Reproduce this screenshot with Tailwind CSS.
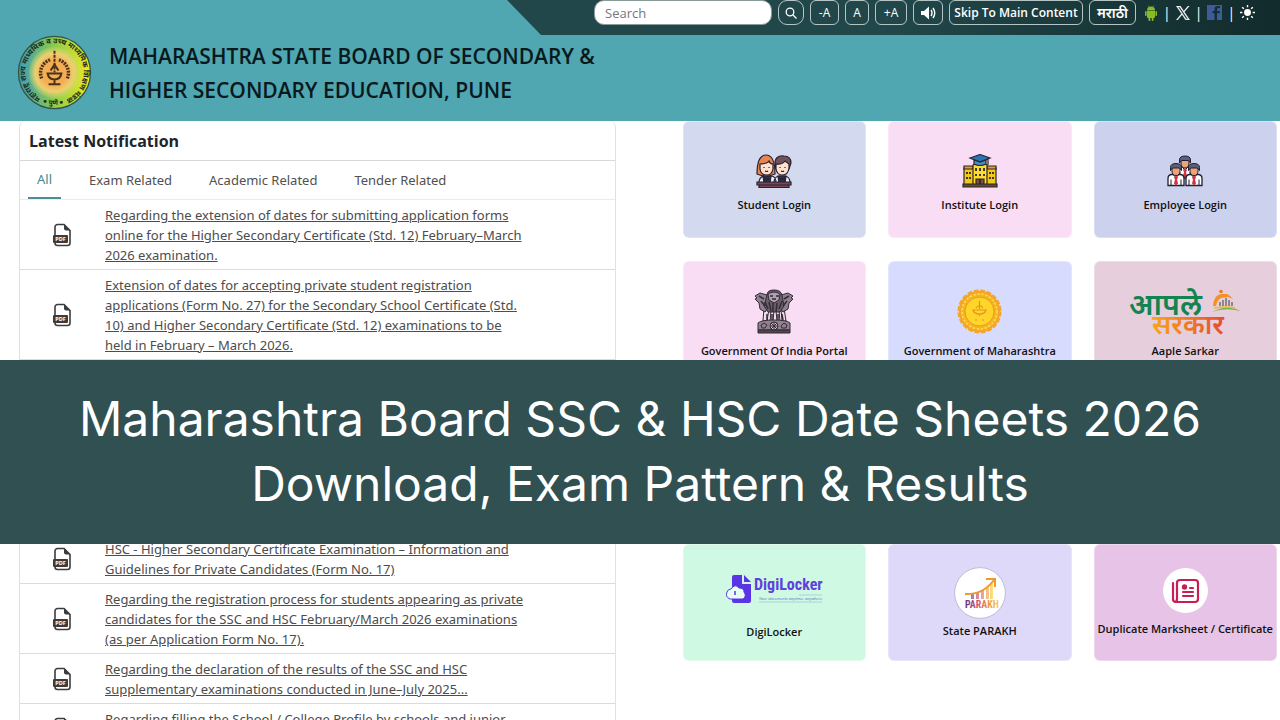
<!DOCTYPE html>
<html lang="en">
<head>
  <meta charset="UTF-8" />
  <title>Maharashtra State Board</title>
  <meta name="viewport" content="width=device-width, initial-scale=1.0" />
  <script src="https://cdn.jsdelivr.net/npm/@tailwindcss/browser@4"></script>
</head>
<body class="bg-white h-screen overflow-hidden font-['Open_Sans','Noto_Sans',sans-serif] text-[#212529]">

  <!-- shared icons -->
  <svg class="hidden">
    <symbol id="pdf" viewBox="0 0 20 24">
      <path d="M3 12V4a2.500 2.500 0 0 1 2.500-2.500H12l6 6V20a2.500 2.500 0 0 1-2.500 2.500h-10A2.500 2.500 0 0 1 3 20" fill="none" stroke="#3c3c3c" stroke-width="1.600" />
      <path d="M12 1l6.500 6.500H14a2 2 0 0 1-2-2z" fill="#3c3c3c" />
      <rect x="1" y="12" width="15" height="8" rx="1" fill="#3c3c3c" />
      <text x="8.500" y="18" text-anchor="middle" font-size="5.500" font-weight="700" fill="#fff">PDF</text>
    </symbol>
    <symbol id="employee" viewBox="0 0 18 24">
      <path d="M1 23v-7q0-4 4-4h8q4 0 4 4v7z" fill="#fff" stroke="#202033" stroke-width="1.300" />
      <path d="M6 12l3 3 3-3M4 17v6M14 17v6" fill="none" stroke="#202033" />
      <path d="M9 13l2 2-1 2 1 4-2 2-2-2 1-4-1-2z" fill="#d92f42" />
      <path d="M5 4h8v4q0 5-4 5t-4-5z" fill="#eda47b" stroke="#202033" />
      <path d="M3.500 8V5q0-4 5.500-4t5.500 4v3l-2-2.500h-7z" fill="#5b6078" stroke="#202033" />
    </symbol>
  </svg>

  <header class="bg-[#50a6b1] h-[121px] flex flex-col">
    <div class="ml-auto w-[773px] h-[35px] shrink-0 pl-[87px] flex items-start gap-[6px] text-white bg-linear-to-r from-[#21474a] from-50% to-[#122b2c] [clip-path:polygon(0_0,100%_0,100%_100%,34px_100%)]">
      <input type="search" aria-label="Search" placeholder="Search" class="w-[178px] h-[25px] rounded-[10px] bg-white border border-[#8b9a9b] px-[10px] text-[13px] text-[#555] placeholder:text-[#777]" />
      <button aria-label="Search" class="w-[26px] h-[25px] border border-[#b5c5c5] rounded-[9px] flex items-center justify-center">
        <svg class="size-3" viewBox="0 0 12 12" fill="none" stroke="currentColor" stroke-width="1.300"><circle cx="5" cy="5" r="3.800" /><path d="M8 8l3.500 3.500" /></svg>
      </button>
      <button class="w-[29px] h-[25px] border border-[#b5c5c5] rounded-md text-[12px]">-A</button>
      <button class="w-[24px] h-[25px] border border-[#b5c5c5] rounded-md text-[12px]">A</button>
      <button class="w-[32px] h-[25px] border border-[#b5c5c5] rounded-md text-[12px]">+A</button>
      <button aria-label="Screen reader" class="w-[30px] h-[25px] border border-[#b5c5c5] rounded-md flex items-center justify-center">
        <svg class="w-4 h-[14px]" viewBox="0 0 16 14"><path d="M1 5h3l5-4.500v13L4 9H1z" fill="#fff" /><path d="M11 4q2 3 0 6M13 2q3.500 5 0 10" fill="none" stroke="#fff" stroke-width="1.400" /></svg>
      </button>
      <button class="w-[134px] h-[25px] border border-[#b5c5c5] rounded-md text-[12px] font-semibold whitespace-nowrap">Skip To Main Content</button>
      <button lang="mr" class="w-[47px] h-[25px] border border-[#b5c5c5] rounded-md text-[14px] font-semibold whitespace-nowrap">मराठी</button>
      <div class="h-[25px] pl-[2px] flex items-center gap-[5px] text-[14px]">
        <a href="#" aria-label="Android app">
          <svg class="w-[14px] h-4" viewBox="0 0 14 16" fill="#86bd24"><path d="M3 5.500a4 4 0 0 1 8 0zM3 6h8v6q0 1-1 1H4q-1 0-1-1z" /><rect x="1" y="6" width="1.600" height="5" rx=".8" /><rect x="11.400" y="6" width="1.600" height="5" rx=".8" /><rect x="4.500" y="12" width="1.800" height="4" rx=".8" /><rect x="7.700" y="12" width="1.800" height="4" rx=".8" /><path d="M4 .5l1.500 2M10 .5l-1.500 2" stroke="#86bd24" stroke-width=".6" /></svg>
        </a>
        <span>|</span>
        <a href="#" aria-label="X">
          <svg class="w-[14px] h-[14px]" viewBox="0 0 24 24" fill="#fff" stroke="#fff" stroke-width=".7"><path d="M14.200 10.200 22.700 0h-2l-7.400 8.800L7.400 0H.6l8.900 13.300L.6 24h2l7.800-9.300 6.200 9.300h6.800zm-2.700 3.300-.9-1.300L3.400 1.600h3.100l5.800 8.500.9 1.300 7.500 11.100h-3.100z" /></svg>
        </a>
        <span>|</span>
        <a href="#" aria-label="Facebook">
          <svg class="w-[15px] h-[15px]" viewBox="0 0 15 15"><rect width="15" height="15" fill="#3f5b9a" /><path d="M13 3h-1.500Q10 3 10 4.500V6h3l-.4 2.300H10V15H7.500V8.300H5.500V6h2V4.200Q7.500 1 10.800 1H13z" fill="#142e31" /></svg>
        </a>
        <span>|</span>
        <a href="#" aria-label="Theme">
          <svg class="w-[15px] h-[15px]" viewBox="0 0 16 16"><circle cx="8" cy="8" r="3.700" fill="#fff" /><path d="M8 0v2.500M8 13.500V16M0 8h2.500M13.500 8H16M2.300 2.300l1.800 1.800M11.900 11.900l1.800 1.800M2.300 13.700l1.800-1.800M11.900 4.100l1.800-1.800" stroke="#fff" stroke-width="1.500" /></svg>
        </a>
      </div>
    </div>
    <div class="flex items-start pl-[17px] gap-[17px]">
      <svg class="size-[75px] shrink-0 overflow-visible" viewBox="0 0 76 76">
        <defs>
          <linearGradient id="seal"><stop offset="0" stop-color="#3e9cb4" /><stop offset=".5" stop-color="#8ccb4a" /><stop offset="1" stop-color="#f4ea22" /></linearGradient>
          <radialGradient id="sun"><stop offset=".5" stop-color="#f3ae55" /><stop offset=".75" stop-color="#edcf70" /><stop offset="1" stop-color="#c9dc70" stop-opacity=".2" /></radialGradient>
          <path id="ring" d="M24 64A29.500 29.500 0 1 1 52 64" />
          <path id="ringBottom" d="M25 68Q38 74 51 68" />
        </defs>
        <circle cx="38" cy="38" r="36.500" fill="url(#seal)" stroke="#315447" stroke-width="1.300" />
        <circle cx="38" cy="38" r="26" fill="url(#sun)" />
        <text font-size="7.500" font-weight="700" fill="#222c20" lang="mr"><textPath href="#ring">महाराष्ट्र राज्य माध्यमिक व उच्च माध्यमिक शिक्षण मंडळ</textPath></text>
        <text font-size="7" font-weight="700" fill="#222c20" lang="mr"><textPath href="#ringBottom" startOffset="1">● पुणे ●</textPath></text>
        <g fill="none" stroke="#4b311a">
          <path d="M25 44A14 14 0 0 1 34 25M51 44A14 14 0 0 0 42 25" stroke-width="3.500" stroke-dasharray="2 1" />
          <path d="M38 16v22" stroke-width="2" stroke-dasharray="3 1" />
          <path d="M31 39h14q-1 6-7 6t-7-6zM38 45v4M32 50h12M34 36l4-6 4 6" stroke-width="2" />
        </g>
      </svg>
      <h1 class="mt-[4px] text-[21px] leading-[34px] font-semibold text-[#09191c]">MAHARASHTRA STATE BOARD OF SECONDARY &amp;<br />HIGHER SECONDARY EDUCATION, PUNE</h1>
    </div>
  </header>

  <main>
    <section class="flex items-start gap-[67px] pl-[19px] pr-[3px]">
      <div class="flex-1 min-w-0 border-x border-[#dee2e6] rounded-t-md">
        <h2 class="h-10 pl-[9px] flex items-center border-b border-[#d8d8d8] text-[16px] font-bold">Latest Notification</h2>
        <nav class="h-[39px] pl-2 flex border-b border-[#e9ecef] font-['Noto_Sans',sans-serif] text-[13px] text-[#505050]">
          <a href="#" class="px-[9px] mr-[19px] leading-[36px] border-b-2 border-[#4a8f96] text-[#46888d]">All</a>
          <a href="#" class="px-[9px] mr-[19px] leading-[39px]">Exam Related</a>
          <a href="#" class="px-[9px] mr-[19px] leading-[39px]">Academic Related</a>
          <a href="#" class="px-[9px] leading-[39px]">Tender Related</a>
        </nav>
        <ul class="font-['Noto_Sans',sans-serif] text-[13px] leading-5 text-[#4c4c4c]">
          <li class="pt-[5px] pb-1 flex items-center border-b border-[#dcdcdc]">
            <svg class="ml-8 mr-[33px] w-5 h-6 shrink-0"><use href="#pdf" /></svg>
            <a href="#" class="underline">Regarding the extension of dates for submitting application forms<br />online for the Higher Secondary Certificate (Std. 12) February–March<br />2026 examination.</a>
          </li>
          <li class="pt-[5px] pb-1 flex items-center border-b border-[#dcdcdc]">
            <svg class="ml-8 mr-[33px] w-5 h-6 shrink-0"><use href="#pdf" /></svg>
            <a href="#" class="underline">Extension of dates for accepting private student registration<br />applications (Form No. 27) for the Secondary School Certificate (Std.<br />10) and Higher Secondary Certificate (Std. 12) examinations to be<br />held in February – March 2026.</a>
          </li>
        </ul>
      </div>

      <div class="flex-1 min-w-0 grid grid-cols-3 gap-x-[22px] gap-y-[23px] text-[11px] leading-4 font-semibold text-[#111] text-center whitespace-nowrap">
        <a href="#" class="h-[117px] pt-8 flex flex-col items-center gap-[9px] rounded-md bg-[#d3d9ee] border border-white/30">
          <svg class="w-9 h-[34px]" viewBox="0 0 36 34" stroke="#29212f" stroke-width="1.200">
            <path d="M3 29q0-7 7-7h5q5 0 5 7zM18 29q0-7 6-7h4q6 0 6 7z" fill="#e8edff" />
            <path d="M7 22h8l-1 7H8zM22 22h8l-1 7h-6z" fill="#293451" />
            <path d="M1 20Q1 1 10 1t9 19q-9 4-18 0z" fill="#e98550" />
            <path d="M19 8q1-7 9-6 7 0 7 7l-2 6H20z" fill="#71515a" />
            <path d="M4 10q7 0 9-3 1 3 4 3v5q-1 6-6.500 6T4 15zM20 10q6 1 9-3l4 3v4q-1 7-6.500 7T20 15z" fill="#ffe1cf" />
            <path d="M8 13v1M13 13v1M24 13v1M29 13v1M9 17q2 1 3 0M25 17q2 1 3 0M8 24l5 2M13 24l-5 2M23 24l6 2M29 24l-6 2" fill="none" />
            <path d="M1 28h34v3H1zM3 31h30v2.500H3z" fill="#754958" />
          </svg>
          Student Login
        </a>
        <a href="#" class="h-[117px] pt-8 flex flex-col items-center gap-[9px] rounded-md bg-[#f8ddf5] border border-white/30">
          <svg class="w-9 h-[34px]" viewBox="0 0 36 34" stroke="#2b272c" stroke-width="1.200">
            <path d="M2 14h32v18H2z" fill="#f1c91b" /><path d="M2 12h9v3H2zM25 12h9v3h-9z" fill="#e99935" />
            <path d="M11 11l7-3 7 3v21H11z" fill="#ffdb2d" />
            <path d="M8 4l10-3.500L28 4l-10 4z" fill="#2c73b8" /><path d="M12 6v4q6 3 12 0V6l-6 2z" fill="#3e91cd" /><path d="M26 4v7" />
            <path d="M14 25h8v7h-8z" fill="#84513e" />
            <path d="M5 18v2M8 18v2M5 23v2M8 23v2M28 18v2M31 18v2M28 23v2M31 23v2M14 14v3M18 14v3M22 14v3M14 20v2M18 20v2M22 20v2M18 25v7" stroke-width="1.800" />
            <path d="M1 30h34v3H1z" fill="#644b30" />
          </svg>
          Institute Login
        </a>
        <a href="#" class="h-[117px] pt-8 flex flex-col items-center gap-[9px] rounded-md bg-[#ccd2ee] border border-white/30">
          <svg class="w-9 h-[34px]" viewBox="0 0 36 34"><use href="#employee" x="9" y="1" width="18" height="24" /><use href="#employee" x="0" y="8" width="18" height="25" /><use href="#employee" x="18" y="8" width="18" height="25" /></svg>
          Employee Login
        </a>

        <a href="#" class="h-[99px] pt-[27px] flex flex-col items-center gap-[9px] rounded-t-md bg-[#f8ddf5] border border-b-0 border-white/30">
          <svg class="w-10 h-[45px] shrink-0" viewBox="0 0 40 45" fill="#91818f" stroke="#332b36" stroke-width="1">
            <path d="M10 19l-1 13h4l2-12zM17 21l-1 12h3l1-12zM22 21l1 12h3l-1-12zM27 20l1 12h4l-2-13z" fill="#eee2ed" />
            <path d="M3 9L1 7l5-3 7 2 2 12-4 5-5-3-1-6-4-4zM37 9l2-2-5-3-7 2-2 12 4 5 5-3 1-6 4-4z" />
            <path d="M13 6q0-5 7-5t8 5l2 11-4 6H14l-4-6z" fill="#6b5f6d" />
            <path d="M14 5q6-4 12 0l-1 6-5 3-5-3z" fill="#b0a0af" />
            <path d="M16 7h3M22 7h3M18 10h4M11 13l3 7M15 13l2 9M19 14v9M23 14l-1 9M28 12l-3 8M5 7l5 3M35 7l-5 3M7 12l4 5M33 12l-4 5M13 25v6M28 25l1 6M18 25v6M24 25v6" fill="none" stroke-width="1.500" />
            <path d="M4 34q3-3 16-3t16 3v7H4z" /><path d="M4 41h32v3H4z" fill="#504652" />
            <circle cx="20" cy="37" r="4" fill="#cfbfcd" /><path d="M20 33v8M16 37h8M17 34l6 6M23 34l-6 6M7 36l3-2 3 2-2 3H8zM27 37l3-3 3 2-1 3h-4z" />
          </svg>
          Government Of India Portal
        </a>
        <a href="#" class="h-[99px] pt-[27px] flex flex-col items-center gap-[9px] rounded-t-md bg-[#d7dcff] border border-b-0 border-white/30">
          <svg class="w-[45px] h-[45px] shrink-0" viewBox="0 0 45 45" fill="none">
            <circle cx="22.500" cy="22.500" r="19.500" fill="#f9b526" stroke="#f4a52a" stroke-width="2" />
            <circle cx="22.500" cy="22.500" r="20.500" stroke="#f4a52a" stroke-width="3" stroke-dasharray="5 1.440" />
            <circle cx="22.500" cy="22.500" r="17.500" fill="#f6b41f" stroke="#ffe05a" stroke-width="1.500" stroke-dasharray="2 2" />
            <circle cx="22.500" cy="22.500" r="14.500" fill="#ffd529" stroke="#e99a22" />
            <path d="M22.500 12v8M19 19q3.500-5 7 0M16 21h13q-1 4-6.500 4T16 21zM22.500 25v2M18 31h2M25 31h2" stroke="#e98f22" stroke-width="1.200" />
          </svg>
          Government of Maharashtra
        </a>
        <a href="#" class="h-[99px] pt-[27px] flex flex-col items-center gap-[9px] rounded-t-md bg-[#e7cedc] border border-b-0 border-white/30">
          <svg class="w-[112px] h-[45px] shrink-0 overflow-visible" viewBox="0 0 112 45" lang="mr">
            <defs><linearGradient id="saffron"><stop offset="0" stop-color="#f8a51c" /><stop offset="1" stop-color="#e34e2f" /></linearGradient></defs>
            <text x="0" y="26" font-size="30" font-weight="600" fill="#138450">आपले</text>
            <text x="23" y="45" font-size="27" font-weight="600" fill="url(#saffron)">सरकार</text>
            <path d="M84 17q1-12 9-12h5q4 2 6 5l-5-2-7 1q-4 2-5 8z" fill="#f39124" /><circle cx="92" cy="2.500" r="1.800" fill="#ef7627" />
            <path d="M91 17v-4M94 17v-6M97 17V9M100 17v-6M103 17v-4" stroke="#8f858b" stroke-width="2" />
            <path d="M83 23q12-5 29-1-14-7-29 1z" fill="#6ab53c" /><path d="M85 19q12-2 21 0" stroke="#edba2c" stroke-width="1.500" fill="none" />
          </svg>
          Aaple Sarkar
        </a>
      </div>
    </section>

    <section class="relative z-10 h-[184px] pb-[2px] bg-[#305052] flex items-center justify-center text-white text-center">
      <h2 class="font-['Inter',sans-serif] text-[48px] leading-[65px] whitespace-nowrap">Maharashtra Board SSC &amp; HSC Date Sheets 2026<br />Download, Exam Pattern &amp; Results</h2>
    </section>

    <section class="flex items-start gap-[67px] pl-[19px] pr-[3px]">
      <!-- the list runs on beneath the banner -->
      <ul class="-mt-[10px] flex-1 min-w-0 border-x border-[#dee2e6] font-['Noto_Sans',sans-serif] text-[13px] leading-5 text-[#4c4c4c]">
        <li class="pt-[5px] pb-1 flex items-center border-b border-[#dcdcdc]">
          <svg class="ml-8 mr-[33px] w-5 h-6 shrink-0"><use href="#pdf" /></svg>
          <a href="#" class="underline">HSC - Higher Secondary Certificate Examination – Information and<br />Guidelines for Private Candidates (Form No. 17)</a>
        </li>
        <li class="pt-[5px] pb-1 flex items-center border-b border-[#dcdcdc]">
          <svg class="ml-8 mr-[33px] w-5 h-6 shrink-0"><use href="#pdf" /></svg>
          <a href="#" class="underline">Regarding the registration process for students appearing as private<br />candidates for the SSC and HSC February/March 2026 examinations<br />(as per Application Form No. 17).</a>
        </li>
        <li class="pt-[5px] pb-1 flex items-center border-b border-[#dcdcdc]">
          <svg class="ml-8 mr-[33px] w-5 h-6 shrink-0"><use href="#pdf" /></svg>
          <a href="#" class="underline">Regarding the declaration of the results of the SSC and HSC<br />supplementary examinations conducted in June–July 2025...</a>
        </li>
        <li class="pt-[5px] pb-1 flex items-center border-b border-[#dcdcdc]">
          <svg class="ml-8 mr-[33px] w-5 h-6 shrink-0"><use href="#pdf" /></svg>
          <a href="#" class="underline">Regarding filling the School / College Profile by schools and junior<br />colleges.</a>
        </li>
      </ul>

      <div class="flex-1 min-w-0 grid grid-cols-3 gap-x-[22px] text-[11px] leading-4 font-semibold text-[#111] text-center whitespace-nowrap">
        <a href="#" class="h-[117px] pt-[29px] flex flex-col items-center gap-[18px] rounded-md bg-[#d0f9e3] border border-white/30">
          <svg class="w-24 h-8 shrink-0 overflow-visible" viewBox="0 0 96 32">
            <path d="M6 3q0-2 2-2h8v9h9v17q0 2-2 2H8q-2 0-2-2z" fill="#5a35e6" /><path d="M18 1l7 7h-7z" fill="#5a35e6" />
            <path d="M4 25q-5-2-3-7 1-3 4-3 4-6 8-1 5 0 5 4 3 4-1 7z" fill="#e7fff3" stroke="#5a35e6" /><path d="M9 17v4" stroke="#5a35e6" stroke-width="1.500" />
            <text x="28" y="16" font-family="Liberation Sans Narrow, Roboto Condensed, Roboto" font-size="16" font-weight="700" fill="#5d42dc">DigiLocker</text>
            <path d="M73 21h23M33 28h63" stroke="#8fbbd0" stroke-width=".6" />
            <text x="33" y="26" font-size="4" font-weight="400" font-style="italic" fill="#5870c8">Your documents anytime, anywhere</text>
          </svg>
          DigiLocker
        </a>
        <a href="#" class="h-[117px] pt-[22px] flex flex-col items-center gap-[4px] rounded-md bg-[#ded9f9] border border-white/30">
          <svg class="w-[52px] h-[52px] shrink-0" viewBox="0 0 52 52">
            <defs><linearGradient id="parakh"><stop offset="0" stop-color="#60358b" /><stop offset=".4" stop-color="#d75b64" /><stop offset="1" stop-color="#ffd22f" /></linearGradient></defs>
            <circle cx="26" cy="26" r="25.400" fill="#fff" stroke="#b8bfd9" />
            <path d="M17 27l3-1v6h-3zM22 26l3-2v8h-3zM27 24l3-2v10h-3zM32 22l3-2v12h-3zM36 18l3-2v16h-3z" fill="url(#parakh)" opacity=".65" />
            <text x="11" y="41" font-family="Liberation Sans Narrow, Roboto Condensed, Roboto" font-size="10" font-weight="700" fill="url(#parakh)">PARAKH</text>
            <path d="M11 27q18 1 29-14M32 12h9v8" fill="none" stroke="#ed992e" stroke-width="2" />
          </svg>
          State PARAKH
        </a>
        <a href="#" class="h-[117px] pt-[23px] flex flex-col items-center gap-[8px] rounded-md bg-[#e7c4e7] border border-white/30">
          <svg class="w-[45px] h-[45px] shrink-0" viewBox="0 0 45 45" fill="none" stroke="#c51f54" stroke-width="2.200" stroke-linecap="round">
            <circle cx="22.500" cy="22.500" r="22.500" fill="#fff" stroke="none" />
            <path d="M14 31V15q0-3 3-3h15q3 0 3 3v16q0 3-3 3H13q-3 0-3-3V15M14 31q0 3-2 3M20 24h10M20 28h10M27 20h3" /><circle cx="21.500" cy="19" r="1.600" fill="#c51f54" />
          </svg>
          Duplicate Marksheet / Certificate
        </a>
      </div>
    </section>
  </main>
</body>
</html>
